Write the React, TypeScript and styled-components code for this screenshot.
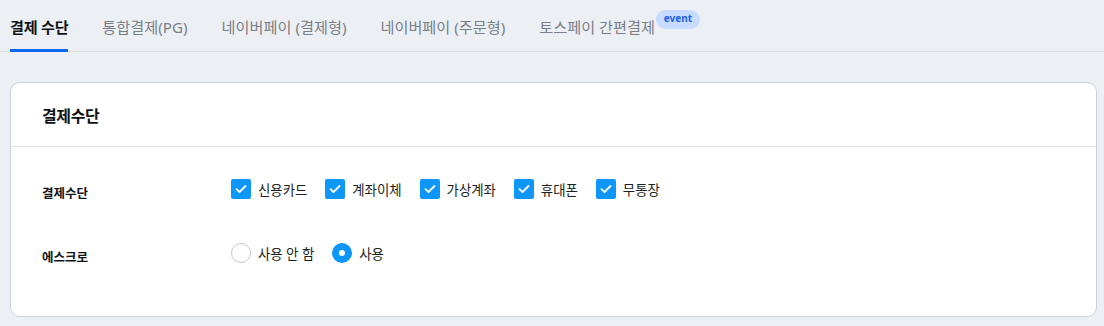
import styled, { createGlobalStyle } from 'styled-components';

const GlobalStyle = createGlobalStyle`
  html, body {
    margin: 0;
    padding: 0;
    background: #eceff4;
    font-family: "Noto Sans", "Noto Sans CJK KR", sans-serif;
  }
`;

const Page = styled.div`
  width: 1104px;
  min-height: 326px;
  background: #eceff4;
`;

const TabBar = styled.nav`
  display: flex;
  align-items: stretch;
  gap: 34px;
  height: 52px;
  padding-left: 10px;
  border-bottom: 1px solid #d8dce2;
  box-sizing: border-box;
`;

const Tab = styled.div<{ $active?: boolean }>`
  position: relative;
  display: flex;
  align-items: center;
  font-size: 15.2px;
  font-weight: ${p => (p.$active ? 700 : 400)};
  color: ${p => (p.$active ? '#111318' : '#7a7f87')};
  letter-spacing: ${p => (p.$active ? '-0.3px' : '0')};
  border-bottom: 3px solid ${p => (p.$active ? '#0b66f2' : 'transparent')};
  margin-bottom: -1px;
  padding-top: 2px;
  box-sizing: border-box;
`;

const EventBadge = styled.span`
  position: absolute;
  top: 10px;
  right: -45px;
  height: 19px;
  padding: 0 8px;
  border-radius: 10px;
  background: #c8dcff;
  color: #1d62e6;
  font-size: 10px;
  font-weight: 700;
  line-height: 17px;
  letter-spacing: 0;
`;

const Content = styled.div`
  padding: 30px 7px 0 10px;
`;

const Card = styled.section`
  background: #ffffff;
  border: 1px solid #c9d3de;
  border-radius: 10px;
  box-sizing: border-box;
`;

const CardHeader = styled.header`
  height: 63px;
  display: flex;
  align-items: center;
  padding: 0 31px;
  border-bottom: 1px solid #dcdfe3;
`;

const CardTitle = styled.h2`
  margin: 0;
  font-size: 16px;
  font-weight: 700;
  color: #111318;
  letter-spacing: -0.4px;
`;

const CardBody = styled.div`
  padding: 10px 31px 31px;
`;

const Row = styled.div`
  display: flex;
  align-items: center;
  height: 64px;
`;

const RowLabel = styled.div`
  width: 189px;
  margin-top: 6px;
  font-size: 12.5px;
  font-weight: 700;
  color: #111318;
`;

const Options = styled.div`
  display: flex;
  align-items: center;
  gap: 18px;
`;

const Option = styled.label`
  display: flex;
  align-items: center;
  gap: 7px;
  font-size: 13.4px;
  color: #1c1e22;
  cursor: pointer;
`;

const CheckBox = styled.span`
  width: 20px;
  height: 20px;
  border-radius: 2px;
  background: #0d96fb;
  display: flex;
  align-items: center;
  justify-content: center;
`;

const Radio = styled.span<{ $checked?: boolean }>`
  width: 20px;
  height: 20px;
  border-radius: 50%;
  box-sizing: border-box;
  display: flex;
  align-items: center;
  justify-content: center;
  background: ${p => (p.$checked ? '#0d96fb' : '#ffffff')};
  border: ${p => (p.$checked ? 'none' : '1px solid #c4c7cc')};
`;

const RadioDot = styled.span`
  width: 6px;
  height: 6px;
  border-radius: 50%;
  background: #ffffff;
`;

const Check = () => (
  <svg width="12" height="10" viewBox="0 0 12 10" fill="none">
    <path d="M1.5 5.2 L4.5 8 L10.5 2" stroke="#fff" strokeWidth="1.8" strokeLinecap="round" strokeLinejoin="round" />
  </svg>
);

const tabs = ['결제 수단', '통합결제(PG)', '네이버페이 (결제형)', '네이버페이 (주문형)', '토스페이 간편결제'];
const methods = ['신용카드', '계좌이체', '가상계좌', '휴대폰', '무통장'];

export default function App() {
  return (
    <Page>
      <GlobalStyle />
      <TabBar>
        {tabs.map((t, i) => (
          <Tab key={t} $active={i === 0}>
            {t}
            {i === tabs.length - 1 && <EventBadge>event</EventBadge>}
          </Tab>
        ))}
      </TabBar>
      <Content>
        <Card>
          <CardHeader>
            <CardTitle>결제수단</CardTitle>
          </CardHeader>
          <CardBody>
            <Row>
              <RowLabel>결제수단</RowLabel>
              <Options>
                {methods.map(m => (
                  <Option key={m}>
                    <CheckBox>
                      <Check />
                    </CheckBox>
                    {m}
                  </Option>
                ))}
              </Options>
            </Row>
            <Row>
              <RowLabel>에스크로</RowLabel>
              <Options>
                <Option>
                  <Radio />
                  사용 안 함
                </Option>
                <Option>
                  <Radio $checked>
                    <RadioDot />
                  </Radio>
                  사용
                </Option>
              </Options>
            </Row>
          </CardBody>
        </Card>
      </Content>
    </Page>
  );
}
